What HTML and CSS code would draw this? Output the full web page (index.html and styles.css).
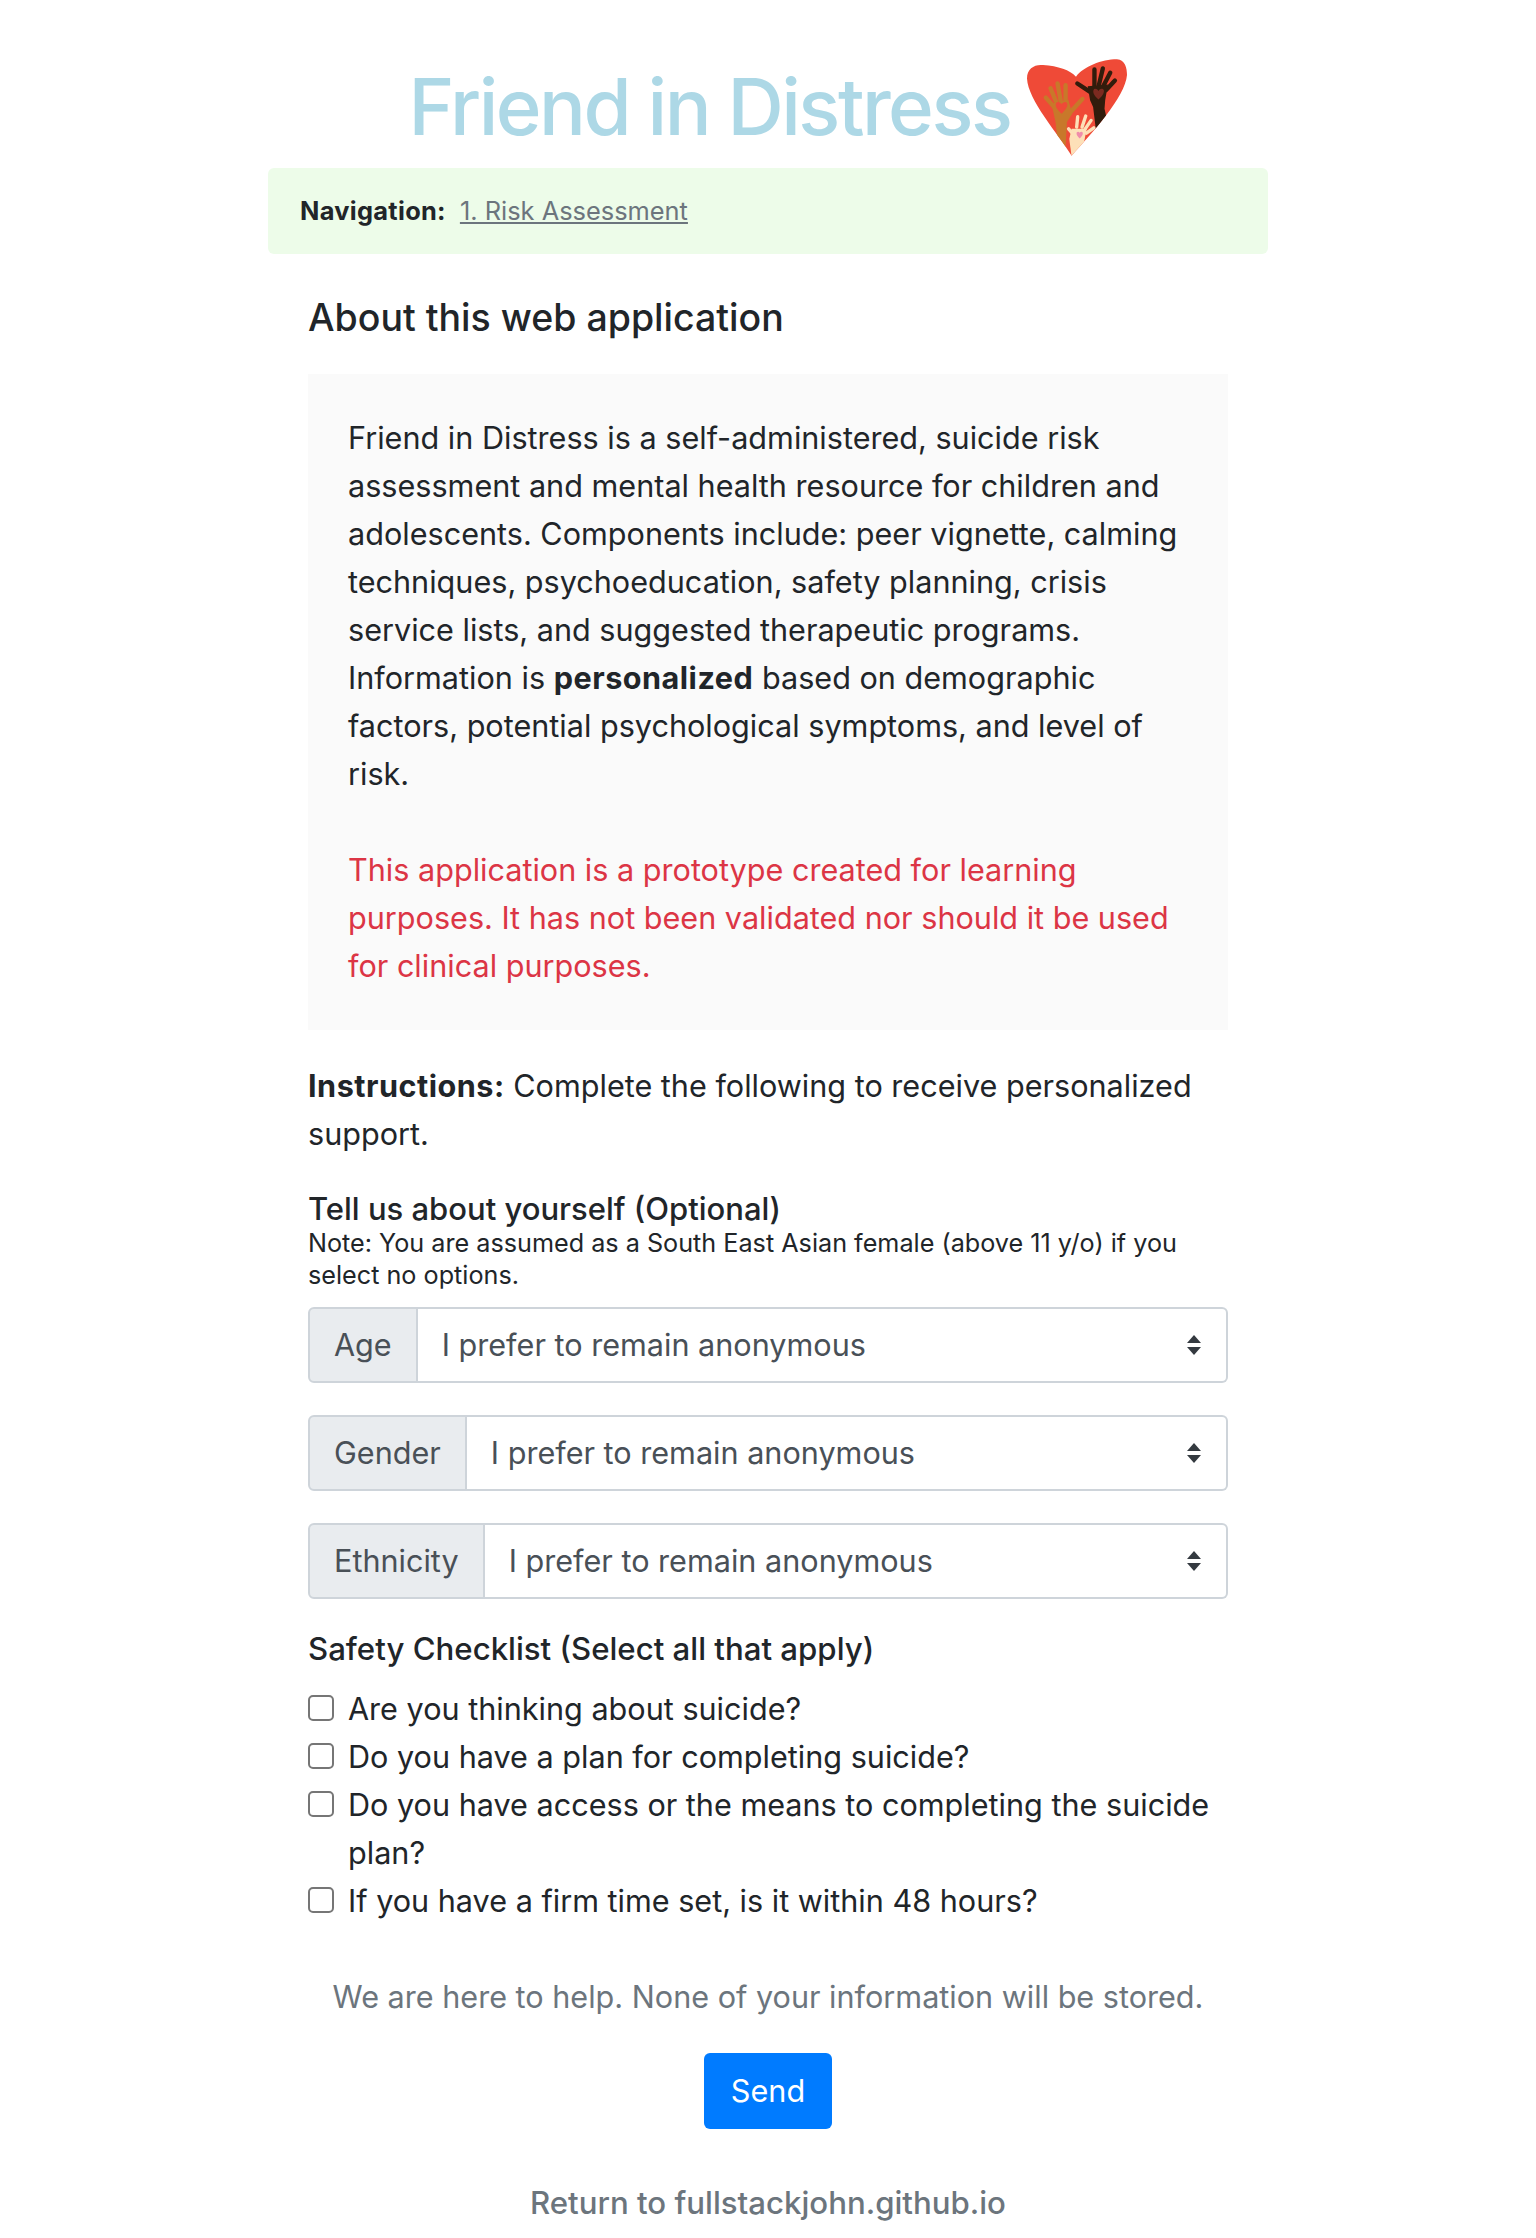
FILE: index.html
```html
<!DOCTYPE html>
<html lang="en">
<head>
    <meta charset="UTF-8" />
    <meta name="viewport" content="width=device-width, initial-scale=1" />
    <title>Friend in Distress</title>
    <link rel="stylesheet" href="styles.css">
</head>
<body>
    <div class="container">
        <header class="title-row">
            <h1>Friend in Distress</h1>
            <svg class="logo" viewBox="57 28 298 287" aria-hidden="true">
                <defs>
                    <clipPath id="heartClip">
                        <path d="M190 315C150 250 60 150 57 85C57 55 80 42 105 45C150 48 185 60 203 80C225 50 280 28 325 28C350 30 355 55 355 75C350 140 250 250 190 315Z"/>
                    </clipPath>
                </defs>
                <path fill="#ef4a37" d="M190 315C150 250 60 150 57 85C57 55 80 42 105 45C150 48 185 60 203 80C225 50 280 28 325 28C350 30 355 55 355 75C350 140 250 250 190 315Z"/>
                <g clip-path="url(#heartClip)">
                    <g stroke="#c8782a" stroke-width="13" stroke-linecap="round" fill="none">
                        <path d="M113 142L140 172"/>
                        <path d="M127 114L147 162"/>
                        <path d="M148 100L158 155"/>
                        <path d="M172 105L172 155"/>
                        <path d="M222 146L182 190"/>
                    </g>
                    <path fill="#c8782a" d="M130 160L180 148L192 190L176 215L172 290L150 290L142 215Z"/>
                    <path fill="#ef4a37" d="M160 190C150 180 140 170 143 160C147 152 156 155 160 162C164 155 174 152 177 160C179 170 170 180 160 190Z"/>
                    <g stroke="#321c0c" stroke-width="13" stroke-linecap="round" fill="none">
                        <path d="M258 58L258 105"/>
                        <path d="M283 55L271 105"/>
                        <path d="M305 68L284 108"/>
                        <path d="M319 91L292 120"/>
                        <path d="M207 100L245 125"/>
                    </g>
                    <path fill="#321c0c" d="M238 108L298 103L290 150L288 175L298 220L265 260L254 170L245 150Z"/>
                    <path fill="#7c2a20" d="M270 148C262 140 252 130 255 120C258 113 266 116 270 122C274 116 282 113 286 120C288 130 278 140 270 148Z"/>
                    <g stroke="#fde0b8" stroke-width="10" stroke-linecap="round" fill="none">
                        <path d="M208 199L205 230"/>
                        <path d="M232 197L221 230"/>
                        <path d="M248 210L230 236"/>
                        <path d="M256 232L234 248"/>
                        <path d="M181 235L198 255"/>
                    </g>
                    <path fill="#fde0b8" d="M190 235L235 235L228 270L222 290L190 318L183 265Z"/>
                    <path fill="#f08cab" d="M214 264C208 258 203 252 205 246C208 242 212 243 214 247C216 243 221 242 223 246C225 252 220 258 214 264Z"/>
                </g>
            </svg>
        </header>

        <nav class="nav-bar">
            <strong>Navigation:</strong>
            <a href="#">1. Risk Assessment</a>
        </nav>

        <main class="content">
            <h2>About this web application</h2>

            <section class="about-box">
                <p>Friend in Distress is a self-administered, suicide risk assessment and mental health resource for children and adolescents. Components include: peer vignette, calming techniques, psychoeducation, safety planning, crisis service lists, and suggested therapeutic programs. Information is <strong>personalized</strong> based on demographic factors, potential psychological symptoms, and level of risk.</p>
                <p class="warning">This application is a prototype created for learning purposes. It has not been validated nor should it be used for clinical purposes.</p>
            </section>

            <p class="instructions"><strong>Instructions:</strong> Complete the following to receive personalized support.</p>

            <form action="#" method="POST">
                <h3 class="tell-us">Tell us about yourself (Optional)</h3>
                <small class="note">Note: You are assumed as a South East Asian female (above 11 y/o) if you select no options.</small>

                <div class="input-group">
                    <label class="input-label" for="age">Age</label>
                    <select id="age" name="age">
                        <option>I prefer to remain anonymous</option>
                    </select>
                </div>
                <div class="input-group">
                    <label class="input-label" for="gender">Gender</label>
                    <select id="gender" name="gender">
                        <option>I prefer to remain anonymous</option>
                    </select>
                </div>
                <div class="input-group">
                    <label class="input-label" for="ethnicity">Ethnicity</label>
                    <select id="ethnicity" name="ethnicity">
                        <option>I prefer to remain anonymous</option>
                    </select>
                </div>

                <h3 class="safety">Safety Checklist (Select all that apply)</h3>
                <label class="check"><input type="checkbox" /><span>Are you thinking about suicide?</span></label>
                <label class="check"><input type="checkbox" /><span>Do you have a plan for completing suicide?</span></label>
                <label class="check"><input type="checkbox" /><span>Do you have access or the means to completing the suicide plan?</span></label>
                <label class="check"><input type="checkbox" /><span>If you have a firm time set, is it within 48 hours?</span></label>

                <p class="help">We are here to help. None of your information will be stored.</p>
                <div class="send-row">
                    <button type="submit">Send</button>
                </div>
            </form>

            <a class="return-link" href="#">Return to fullstackjohn.github.io</a>
        </main>
    </div>
</body>
</html>
```

FILE: styles.css
```css
* {
    box-sizing: border-box;
}
body {
    margin: 0;
    font-family: Inter, 'Liberation Sans', sans-serif;
    font-size: 30.6px;
    line-height: 48px;
    color: #212529;
    background: #fff;
}
.container {
    width: 1000px;
    margin: 0 auto;
}
.title-row {
    display: flex;
    justify-content: center;
    align-items: center;
    gap: 17px;
    height: 168px;
    padding-top: 46px;
}
h1 {
    margin: 0;
    font-size: 78px;
    line-height: 92px;
    font-weight: 550;
    letter-spacing: -2.5px;
    color: #add8e6;
}
.logo {
    width: 100px;
    height: 97px;
}
.nav-bar {
    display: flex;
    gap: 14px;
    align-items: center;
    height: 86px;
    padding: 0 32px;
    background: #edfce9;
    border-radius: 6px;
    font-size: 25.4px;
}
.nav-bar strong {
    font-weight: 700;
    letter-spacing: 0.3px;
}
.nav-bar a {
    color: #6c757d;
    text-decoration: underline;
}
.content {
    padding: 0 40px;
}
h2 {
    margin: 40px 0 32px;
    font-size: 37.5px;
    line-height: 48px;
    font-weight: 500;
}
.about-box {
    padding: 40px;
    background: #fafafa;
}
.about-box p {
    margin: 0;
}
.about-box strong, .instructions strong {
    font-weight: 700;
    letter-spacing: 0.5px;
}
.about-box .warning {
    margin-top: 48px;
    color: #dc3545;
}
.instructions {
    margin: 32px 0 27px;
}
h3 {
    margin: 0;
    font-weight: 500;
}
.tell-us {
    font-size: 31px;
    line-height: 48px;
}
.note {
    display: block;
    margin-top: -6px;
    font-size: 25.2px;
    line-height: 32px;
}
.input-group {
    display: flex;
    height: 76px;
    margin-bottom: 32px;
    color: #495057;
}
.note + .input-group {
    margin-top: 16px;
}
.input-label {
    display: flex;
    align-items: center;
    padding: 0 24px;
    background: #e9ecef;
    border: 2px solid #ced4da;
    border-radius: 6px 0 0 6px;
}
select {
    flex: 1;
    padding: 0 24px;
    border: 2px solid #ced4da;
    border-left: none;
    border-radius: 0 6px 6px 0;
    font: inherit;
    color: #495057;
    appearance: none;
    -webkit-appearance: none;
    background: #fff url("data:image/svg+xml,%3Csvg xmlns='http://www.w3.org/2000/svg' width='16' height='20' viewBox='0 0 16 20'%3E%3Cpath fill='%23343a40' d='M8 0l7 8H1zM8 20l-7-8h14z'/%3E%3C/svg%3E") no-repeat right 24px center;
}
.safety {
    margin: -6px 0 12px;
    font-size: 31.2px;
}
.check {
    display: flex;
    align-items: flex-start;
}
.check input {
    flex: none;
    width: 26px;
    height: 26px;
    margin: 10px 14px 0 0;
    appearance: none;
    -webkit-appearance: none;
    background: #fff;
    border: 2px solid #767676;
    border-radius: 5px;
}
.help {
    margin: 48px 0 32px;
    text-align: center;
    color: #6c757d;
}
.send-row {
    display: flex;
    justify-content: center;
}
button {
    width: 128px;
    height: 76px;
    border: none;
    border-radius: 6px;
    background: #007bff;
    color: #fff;
    font: inherit;
}
.return-link {
    display: block;
    margin-top: 50px;
    text-align: center;
    font-size: 31.2px;
    font-weight: 500;
    color: #6c757d;
    text-decoration: none;
}
```
